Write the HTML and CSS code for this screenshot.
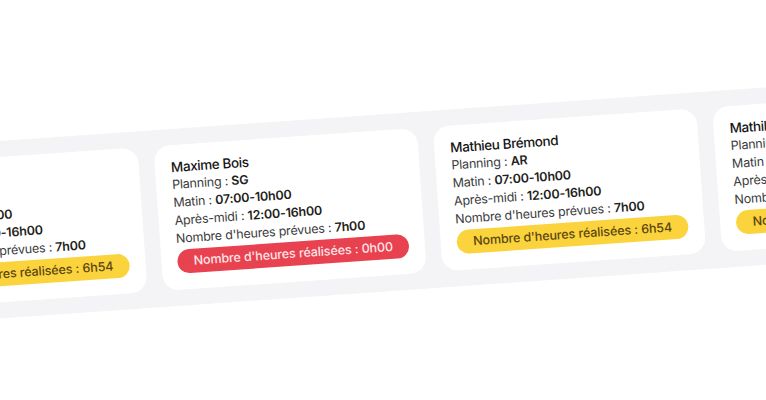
FILE: index.html
```html
<!DOCTYPE html>
<html lang="fr">
<head>
    <meta charset="UTF-8">
    <meta name="viewport" content="width=device-width, initial-scale=1.0">
    <title>Planning</title>
    <link rel="stylesheet" href="styles.css">
</head>
<body>
    <div class="track">
        <div class="card">
            <div class="card-name">Julie Martin</div>
            <div class="card-line">Planning : <b>SG</b></div>
            <div class="card-line">Matin : <b>07:00-10h00</b></div>
            <div class="card-line">Après-midi : <b>12:00-16h00</b></div>
            <div class="card-line">Nombre d'heures prévues : <b>7h00</b></div>
            <div class="pill pill-yellow">Nombre d'heures réalisées : 6h54</div>
        </div>

        <div class="card">
            <div class="card-name">Maxime Bois</div>
            <div class="card-line">Planning : <b>SG</b></div>
            <div class="card-line">Matin : <b>07:00-10h00</b></div>
            <div class="card-line">Après-midi : <b>12:00-16h00</b></div>
            <div class="card-line">Nombre d'heures prévues : <b>7h00</b></div>
            <div class="pill pill-red">Nombre d'heures réalisées : 0h00</div>
        </div>

        <div class="card">
            <div class="card-name">Mathieu Brémond</div>
            <div class="card-line">Planning : <b>AR</b></div>
            <div class="card-line">Matin : <b>07:00-10h00</b></div>
            <div class="card-line">Après-midi : <b>12:00-16h00</b></div>
            <div class="card-line">Nombre d'heures prévues : <b>7h00</b></div>
            <div class="pill pill-yellow">Nombre d'heures réalisées : 6h54</div>
        </div>

        <div class="card">
            <div class="card-name">Mathilde Roux</div>
            <div class="card-line">Planning : <b>AR</b></div>
            <div class="card-line">Matin : <b>07:00-10h00</b></div>
            <div class="card-line">Après-midi : <b>12:00-16h00</b></div>
            <div class="card-line">Nombre d'heures prévues : <b>7h00</b></div>
            <div class="pill pill-yellow">Nombre d'heures réalisées : 7h00</div>
        </div>
    </div>
</body>
</html>
```

FILE: styles.css
```css
html, body {
    margin: 0;
    height: 400px;
    overflow: hidden;
    background-color: #fff;
    font-family: Inter, "Noto Sans", sans-serif;
}

/* tilted strip of cards */
.track {
    display: flex;
    gap: 16px;
    width: max-content;
    padding: 16px;
    margin-top: 151px;
    margin-left: -143px;
    background-color: #f4f4f6;
    transform: rotate(-4deg);
    transform-origin: 0 0;
}

.card {
    width: 264px;
    box-sizing: border-box;
    padding: 13px 16px 16px;
    background-color: #fff;
    border-radius: 16px;
}

.card-name {
    font-size: 13.5px;
    line-height: 18px;
    font-weight: 500;
    letter-spacing: -0.4px;
    color: #151515;
}

.card-line {
    font-size: 12.5px;
    line-height: 18px;
    letter-spacing: -0.2px;
    color: #3a3a3c;
}

.card-line b {
    font-weight: 600;
    color: #1f1f21;
}

.pill {
    margin-top: 2px;
    height: 24px;
    line-height: 24px;
    border-radius: 12px;
    text-align: center;
    font-size: 12.5px;
    font-weight: 500;
    letter-spacing: -0.1px;
}

.pill-yellow {
    background-color: #fbd33d;
    color: #5a4611;
}

.pill-red {
    background-color: #e8414f;
    color: #fde6e8;
}
```
